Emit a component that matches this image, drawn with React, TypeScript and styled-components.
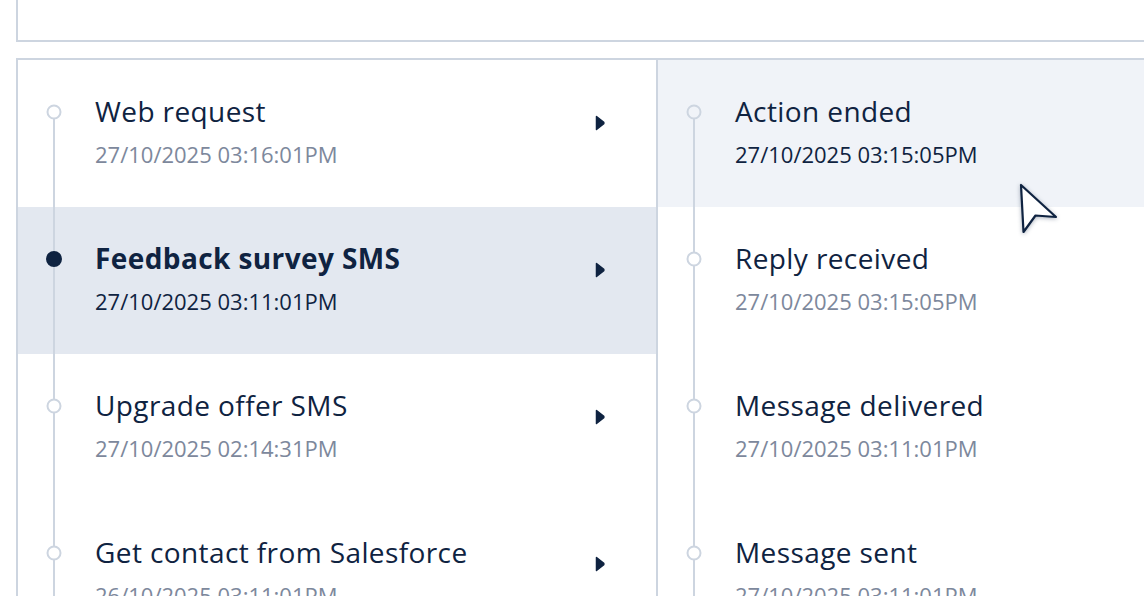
import styled, { createGlobalStyle } from 'styled-components';

const GlobalStyle = createGlobalStyle`
  html, body {
    margin: 0;
    padding: 0;
    background: #ffffff;
    overflow: hidden;
  }
  body {
    font-family: "Open Sans", Lato, sans-serif;
    color: #0f2341;
  }
`;

const Page = styled.div`
  position: relative;
  width: 1144px;
  height: 596px;
  overflow: hidden;
  padding-left: 16px;
  box-sizing: border-box;
`;

const TopBox = styled.div`
  width: 1200px;
  height: 40px;
  border: 2px solid #cdd5e0;
  border-top: none;
`;

const Panel = styled.div`
  margin-top: 16px;
  width: 1200px;
  border: 2px solid #cdd5e0;
  display: grid;
  grid-template-columns: 640px 1fr;
`;

const Column = styled.div<{ $divider?: boolean }>`
  display: flex;
  flex-direction: column;
  ${(p) => (p.$divider ? 'border-right: 2px solid #cdd5e0;' : '')}
`;

const Row = styled.div<{ $tone: 'plain' | 'selected' | 'hover'; $first?: boolean }>`
  position: relative;
  height: 147px;
  flex: none;
  display: grid;
  grid-template-columns: 77px 1fr 60px;
  background: ${(p) =>
    p.$tone === 'selected' ? '#e3e8f0' : p.$tone === 'hover' ? '#f0f3f8' : '#ffffff'};

  &::before {
    content: '';
    position: absolute;
    left: 35px;
    width: 2px;
    top: ${(p) => (p.$first ? '52px' : '0')};
    bottom: 0;
    background: #cdd5e0;
  }
`;

const Marker = styled.span<{ $active?: boolean; $bg: string }>`
  position: absolute;
  left: 36px;
  top: 52px;
  transform: translate(-50%, -50%);
  box-sizing: border-box;
  width: ${(p) => (p.$active ? '16px' : '15px')};
  height: ${(p) => (p.$active ? '16px' : '15px')};
  border-radius: 50%;
  border: 2px solid ${(p) => (p.$active ? '#0f2341' : '#cdd5e0')};
  background: ${(p) => (p.$active ? '#0f2341' : p.$bg)};
  z-index: 1;
`;

const Content = styled.div`
  grid-column: 2;
  padding-top: 35px;
  display: flex;
  flex-direction: column;
  gap: 14px;
`;

const Title = styled.div<{ $bold?: boolean }>`
  font-size: 28px;
  line-height: 32px;
  font-weight: ${(p) => (p.$bold ? 700 : 400)};
  letter-spacing: 0.4px;
  color: #0f2341;
  white-space: nowrap;
`;

const Stamp = styled.div<{ $dark?: boolean }>`
  font-size: 22px;
  line-height: 26px;
  color: ${(p) => (p.$dark ? '#0f2341' : '#7d889c')};
  white-space: nowrap;
`;

const Caret = styled.svg`
  position: absolute;
  left: 577px;
  top: 55px;
  width: 10px;
  height: 16px;
`;

const Pointer = styled.svg`
  position: absolute;
  left: 1017px;
  top: 182px;
  width: 44px;
  height: 56px;
  filter: drop-shadow(0 1px 2px rgba(15, 35, 65, 0.35));
`;

type Item = { title: string; time: string; bold?: boolean; tone: 'plain' | 'selected' | 'hover'; caret?: boolean };

const left: Item[] = [
  { title: 'Web request', time: '27/10/2025 03:16:01PM', tone: 'plain', caret: true },
  { title: 'Feedback survey SMS', time: '27/10/2025 03:11:01PM', bold: true, tone: 'selected', caret: true },
  { title: 'Upgrade offer SMS', time: '27/10/2025 02:14:31PM', tone: 'plain', caret: true },
  { title: 'Get contact from Salesforce', time: '26/10/2025 03:11:01PM', tone: 'plain', caret: true },
];

const right: Item[] = [
  { title: 'Action ended', time: '27/10/2025 03:15:05PM', tone: 'hover' },
  { title: 'Reply received', time: '27/10/2025 03:15:05PM', tone: 'plain' },
  { title: 'Message delivered', time: '27/10/2025 03:11:01PM', tone: 'plain' },
  { title: 'Message sent', time: '27/10/2025 03:11:01PM', tone: 'plain' },
];

const bgFor = (t: Item['tone']) => (t === 'selected' ? '#e3e8f0' : t === 'hover' ? '#f0f3f8' : '#ffffff');

function Timeline({ items }: { items: Item[] }) {
  return (
    <>
      {items.map((it, i) => (
        <Row key={it.title} $tone={it.tone} $first={i === 0}>
          <Marker $active={it.tone === 'selected'} $bg={bgFor(it.tone)} />
          <Content>
            <Title $bold={it.bold}>{it.title}</Title>
            <Stamp $dark={it.tone !== 'plain'}>{it.time}</Stamp>
          </Content>
          {it.caret && (
            <Caret viewBox="0 0 10 16">
              <path d="M1.5 1.5 L8.5 7 Q9.3 8 8.5 9 L1.5 14.5 Z" fill="#0f2341" stroke="#0f2341" strokeWidth="1.5" strokeLinejoin="round" />
            </Caret>
          )}
        </Row>
      ))}
    </>
  );
}

export default function App() {
  return (
    <Page>
      <GlobalStyle />
      <TopBox />
      <Panel>
        <Column $divider>
          <Timeline items={left} />
        </Column>
        <Column>
          <Timeline items={right} />
        </Column>
      </Panel>
      <Pointer viewBox="0 0 44 56">
        <path d="M4 3 L6.5 50 L18.5 33.5 L39 35 Z" fill="#ffffff" stroke="#0f2341" strokeWidth="2.2" strokeLinejoin="round" />
      </Pointer>
    </Page>
  );
}
